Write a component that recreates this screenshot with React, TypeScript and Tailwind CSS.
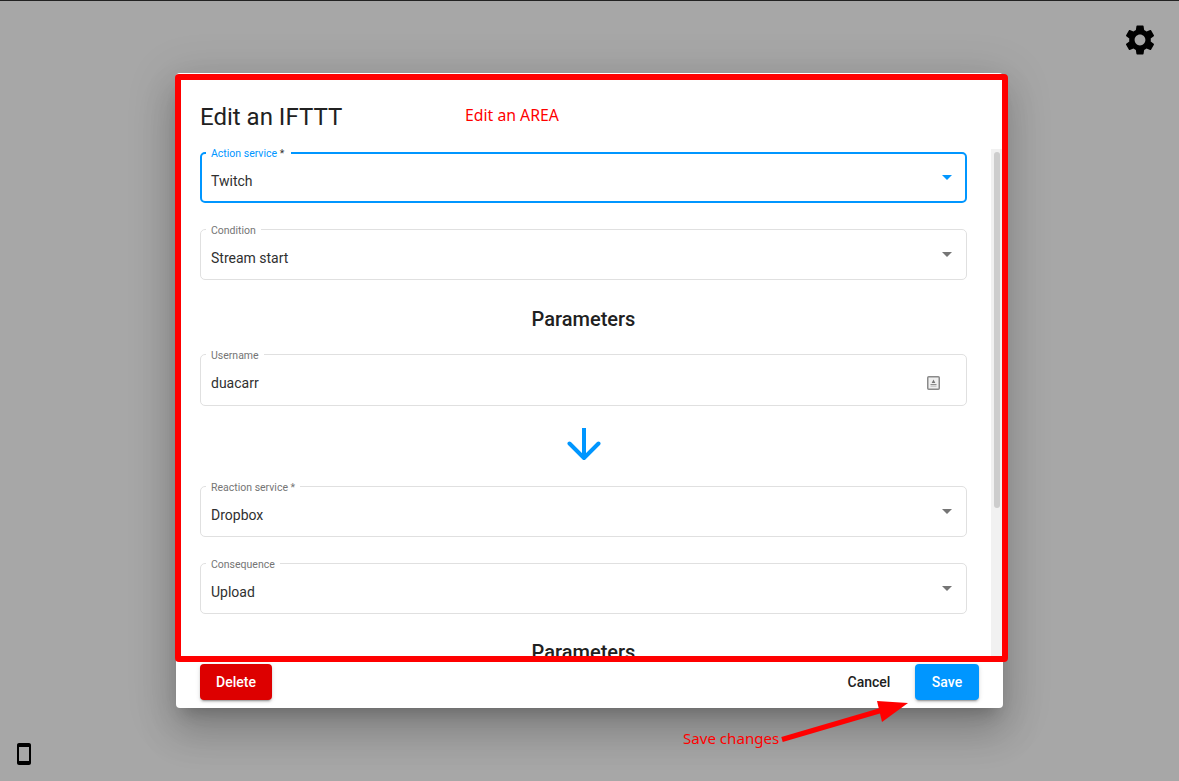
import { MdSettings, MdSmartphone } from "react-icons/md";

interface FieldProps {
  label: string;
  value: string;
  focused?: boolean;
  tall?: boolean;
  children?: React.ReactNode;
}

function Field({ label, value, focused = false, tall = false, children }: FieldProps) {
  return (
    <div
      className={`relative flex items-center rounded-[5px] ${tall ? "h-[52px]" : "h-[51px]"} ${
        focused ? "border-2 border-[#0096ff] pl-[9px] pr-[13px]" : "border border-[#e0e0e0] pl-[10px] pr-[14px]"
      }`}
    >
      <span
        className={`absolute bg-white text-[10.5px] leading-[10px] ${
          focused ? "-top-[5px] left-[4px] pl-[5px] pr-[7px] text-[#0096ff]" : "-top-[4px] left-[5px] px-[5px] text-[#757575]"
        }`}
      >
        {label}
        {focused && <span className="text-[#333333]"> *</span>}
      </span>
      <span className="flex-1 pt-[7px] text-[14px] text-[#303030]">{value}</span>
      {children}
    </div>
  );
}

function Caret({ focused = false }: { focused?: boolean }) {
  return (
    <svg width="10" height="5" viewBox="0 0 10 5" className={`-mt-px ${focused ? "text-[#0096ff]" : "text-[#757575]"}`}>
      <path d="M0 0h10L5 5z" fill="currentColor" />
    </svg>
  );
}

function Heading({ children, last = false }: { children: React.ReactNode; last?: boolean }) {
  return (
    <h3 className={`h-[74px] text-center text-[20px] leading-[28px] font-medium text-[#212121] ${last ? "pt-[24px]" : "pt-[25px]"}`}>
      {children}
    </h3>
  );
}

export default function App() {
  return (
    <div className="relative h-[781px] w-[1179px] overflow-hidden bg-[#a7a7a7] font-['Roboto',sans-serif]">
      <div className="flex h-full flex-col justify-between border-t border-[#222222]">
        <div className="flex justify-end pr-[21px] pt-[21px]">
          <MdSettings size={36} className="text-black" />
        </div>
        <div className="pb-[15px] pl-[12px]">
          <MdSmartphone size={24} className="text-black" />
        </div>
      </div>

      <div className="absolute inset-0 flex items-center justify-center">
        <div className="flex h-[635px] w-[827px] flex-col overflow-hidden rounded-[4px] bg-white shadow-[0px_11px_15px_-7px_rgba(0,0,0,0.2),0px_24px_38px_3px_rgba(0,0,0,0.14),0px_9px_46px_8px_rgba(0,0,0,0.12)]">
          <h2 className="h-[68px] shrink-0 pl-[24px] pt-[25px] text-[24px] leading-[38px] text-[#212121]">Edit an IFTTT</h2>

          <div className="flex min-h-0 flex-1">
            <div className="flex-1 overflow-hidden pl-[24px] pr-[24px] pt-[11px]">
              <div className="flex flex-col">
                <Field label="Action service" value="Twitch" focused>
                  <Caret focused />
                </Field>
                <div className="mt-[26px]">
                  <Field label="Condition" value="Stream start">
                    <Caret />
                  </Field>
                </div>
                <Heading>Parameters</Heading>
                <Field label="Username" value="duacarr" tall>
                  <svg width="13" height="14" viewBox="0 0 13 14" className="mr-[12px] mt-[5px]">
                    <rect x="0.75" y="0.75" width="11.5" height="12.5" rx="1" fill="#f0f0f0" stroke="#8a8a8a" strokeWidth="1.5" />
                    <path d="M6.5 3.5l1.8 3.5H4.7z" fill="#777777" />
                    <rect x="3.5" y="8" width="6" height="1" fill="#8f8f8f" />
                    <rect x="3.5" y="9.6" width="6" height="1" fill="#b5b5b5" />
                  </svg>
                </Field>
                <div className="flex h-[80px] items-center justify-center pb-[4px]">
                  <svg width="34" height="33" viewBox="0 0 34 33" fill="none" stroke="#0096ff" strokeWidth="4" strokeLinejoin="round">
                    <path d="M17 0v30" />
                    <path d="M2.5 15.5L17 30l14.5-14.5" strokeLinecap="round" />
                  </svg>
                </div>
                <Field label="Reaction service *" value="Dropbox">
                  <Caret />
                </Field>
                <div className="mt-[26px]">
                  <Field label="Consequence" value="Upload">
                    <Caret />
                  </Field>
                </div>
                <Heading last>Parameters</Heading>
              </div>
            </div>
            <div className="mt-[8px] w-[12px] shrink-0 bg-[#f1f1f1] pl-[3px] pr-[3px] pt-[3px]">
              <div className="h-[356px] rounded-[3px] bg-[#cdcdcd]" />
            </div>
          </div>

          <div className="flex h-[52px] shrink-0 items-center justify-between px-[24px]">
            <button className="h-[36px] w-[72px] rounded-[4px] bg-[#dd0000] text-[14px] font-medium text-white shadow-[0px_3px_1px_-2px_rgba(0,0,0,0.2),0px_2px_2px_0px_rgba(0,0,0,0.14),0px_1px_5px_0px_rgba(0,0,0,0.12)]">
              Delete
            </button>
            <div className="flex items-center gap-[8px]">
              <button className="h-[36px] w-[76px] text-[14px] font-medium text-[#212121]">Cancel</button>
              <button className="h-[36px] w-[64px] rounded-[4px] bg-[#0096ff] text-[14px] font-medium text-white shadow-[0px_3px_1px_-2px_rgba(0,0,0,0.2),0px_2px_2px_0px_rgba(0,0,0,0.14),0px_1px_5px_0px_rgba(0,0,0,0.12)]">
                Save
              </button>
            </div>
          </div>
        </div>
      </div>

      {/* annotations drawn on top of the screenshot */}
      <div className="pointer-events-none absolute left-[175px] top-[74px] h-[588px] w-[833px] rounded-[4px] border-[6px] border-[#ff0000]" />
      <span className="absolute left-[465px] top-[104px] font-['Noto_Sans',sans-serif] text-[15.8px] leading-[22px] text-[#ff0000]">Edit an AREA</span>
      <span className="absolute left-[683px] top-[727px] font-['Noto_Sans',sans-serif] text-[15.1px] leading-[22px] text-[#ff0000]">Save changes</span>
      <svg className="absolute left-[775px] top-[695px]" width="140" height="50" viewBox="775 695 140 50">
        <path d="M782 739.5L886 709" stroke="#ff0000" strokeWidth="5" fill="none" />
        <path d="M908 703L877 701L882 722z" fill="#ff0000" />
      </svg>
    </div>
  );
}
